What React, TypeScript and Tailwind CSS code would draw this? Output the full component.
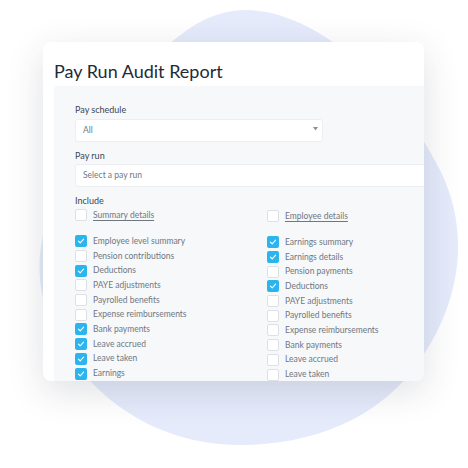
const leftItems: [string, boolean][] = [
  ['Employee level summary', true],
  ['Pension contributions', false],
  ['Deductions', true],
  ['PAYE adjustments', false],
  ['Payrolled benefits', false],
  ['Expense reimbursements', false],
  ['Bank payments', true],
  ['Leave accrued', true],
  ['Leave taken', true],
  ['Earnings', true],
]

const rightItems: [string, boolean][] = [
  ['Earnings summary', true],
  ['Earnings details', true],
  ['Pension payments', false],
  ['Deductions', true],
  ['PAYE adjustments', false],
  ['Payrolled benefits', false],
  ['Expense reimbursements', false],
  ['Bank payments', false],
  ['Leave accrued', false],
  ['Leave taken', false],
]

const Box = ({checked}: {checked: boolean}) =>
  checked ? (
    <span className="flex h-[12px] w-[12px] shrink-0 items-center justify-center rounded-[2px] bg-[#2bb5ef]">
      <svg width="8" height="8" viewBox="0 0 8 8" fill="none">
        <path d="M1.4 4.2 3.2 5.9 6.6 2.2" stroke="#fff" strokeWidth="1.1" strokeLinecap="round" strokeLinejoin="round"/>
      </svg>
    </span>
  ) : (
    <span className="h-[12px] w-[12px] shrink-0 rounded-[2px] border border-[#dde1e6] bg-white"/>
  )

const Item = ({label, checked}: {label: string, checked: boolean}) => (
  <div className="flex h-[14.7px] items-center gap-[6px]">
    <Box checked={checked}/>
    <span className="whitespace-nowrap text-[8.5px] text-[#6f7782]">{label}</span>
  </div>
)

export default function App() {
  return (
    <div className="relative h-[468px] w-[468px] overflow-hidden bg-white" style={{fontFamily: 'Lato, "Liberation Sans", sans-serif'}}>
      <svg className="absolute left-0 top-0" width="468" height="468" viewBox="0 0 468 468">
        <path
          d="M245,10 C320,10 400,90 440,170 C470,230 462,300 420,360 C380,420 310,445 240,445 C150,445 80,390 50,320 C25,260 45,190 110,110 C160,45 200,10 245,10 Z"
          fill="#e5ebfb"
        />
      </svg>

      <div className="relative ml-[43px] mt-[42px] flex h-[339px] w-[381px] flex-col overflow-hidden rounded-[8px] bg-white shadow-[0_10px_36px_rgba(40,50,70,0.15)]">
        <h1 className="ml-[11px] mt-[17px] text-[18px] leading-[24px] text-[#1e2b38]">Pay Run Audit Report</h1>

        <div className="ml-[11px] mt-[3px] flex-1 rounded-tl-[3px] bg-[#f7f8fa] pl-[21px] pt-[18px]">
          <div className="text-[9px] leading-[12px] text-[#3b4652]">Pay schedule</div>
          <div className="mt-[3px] flex h-[23px] w-[248px] items-center justify-between rounded-[3px] border border-[#eceef1] bg-white pl-[7px] pr-[4px]">
            <span className="text-[8.5px] text-[#6f7782]">All</span>
            <svg width="5" height="4" viewBox="0 0 5 4" className="mb-[4px]">
              <path d="M0 0h5L2.5 3.5z" fill="#8a9099"/>
            </svg>
          </div>

          <div className="mt-[8px] text-[9px] leading-[12px] text-[#3b4652]">Pay run</div>
          <div className="mt-[2px] flex h-[23px] w-[400px] items-center rounded-[3px] border border-[#eceef1] bg-white pl-[7px]">
            <span className="text-[8.5px] text-[#6f7782]">Select a pay run</span>
          </div>

          <div className="mt-[8px] text-[9px] leading-[12px] text-[#3b4652]">Include</div>

          <div className="mt-[1px] grid grid-cols-[192px_1fr]">
            <div className="flex flex-col">
              <div className="flex h-[14px] items-center gap-[6px]">
                <Box checked={false}/>
                <span className="text-[8.5px] text-[#6f7782] underline underline-offset-[2px]">Summary details</span>
              </div>
              <div className="mt-[12px] flex flex-col">
                {leftItems.map(([l, c]) => <Item key={l} label={l} checked={c}/>)}
              </div>
            </div>
            <div className="flex flex-col pt-[1px]">
              <div className="flex h-[14px] items-center gap-[6px]">
                <Box checked={false}/>
                <span className="text-[8.5px] text-[#6f7782] underline underline-offset-[2px]">Employee details</span>
              </div>
              <div className="mt-[12px] flex flex-col">
                {rightItems.map(([l, c]) => <Item key={l} label={l} checked={c}/>)}
              </div>
            </div>
          </div>
        </div>
      </div>
    </div>
  )
}
